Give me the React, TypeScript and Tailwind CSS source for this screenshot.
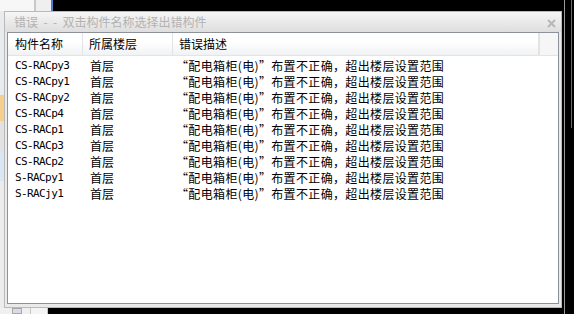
import React from "react";

const rows = [
  "CS-RACpy3",
  "CS-RACpy1",
  "CS-RACpy2",
  "CS-RACp4",
  "CS-RACp1",
  "CS-RACp3",
  "CS-RACp2",
  "S-RACpy1",
  "S-RACjy1",
];

const cjk = { fontFamily: '"Noto Sans CJK SC", "Noto Sans", sans-serif' };
const mono = { fontFamily: '"DejaVu Sans Mono", "Liberation Mono", monospace' };

export default function App() {
  return (
    <div className="relative w-[574px] h-[314px] bg-black overflow-hidden flex">
      {/* background app (behind the window) */}
      <div className="w-[54px] h-full flex flex-col">
        <div className="h-[11px] flex">
          <div className="w-[34px] bg-[#f7f7f7]" />
          <div className="w-[2px] bg-[#c8c8c8]" />
          <div className="w-[15px] bg-[#efefef]" />
          <div className="w-[2px] bg-[#4d7cc8]" />
          <div className="flex-1 bg-black" />
        </div>
        <div className="flex-1 flex">
          <div className="w-[4px] bg-[#e8e8e8] flex flex-col">
            <div className="h-[84px] bg-[#e9ecef]" />
            <div className="h-[26px] bg-[#f7cf8c]" />
            <div className="h-[30px] bg-[#e2e2e2]" />
            <div className="h-[30px] bg-[#d9e7f5]" />
            <div className="flex-1 bg-[#ececec]" />
          </div>
          <div className="flex-1 bg-[#f0f0f0]" />
        </div>
        <div className="h-[6px] flex bg-[#f0f0f0]">
          <div className="w-[12px]" />
          <div className="w-[10px] border border-[#a8a8a8] bg-[#d8dce4]" />
          <div className="w-[8px]" />
          <div className="w-[18px] border-l border-r border-[#c8c8c8] bg-[#f4f4f4]" />
          <div className="flex-1 bg-black" />
        </div>
      </div>
      <div className="flex-1" />
      <div className="w-[12px] h-full flex">
        <div className="w-[2px]" />
        <div className="w-[1px] bg-[#9a9a9a]" />
        <div className="w-[6px]" />
        <div className="w-[1px] h-[128px] bg-[#3d6fc0]" />
        <div className="flex-1" />
      </div>

      {/* dialog window */}
      <div className="absolute left-[4px] top-[11px] w-[558px] h-[297px] border border-[#b9b9b9] bg-[#eaeaea] flex flex-col">
        <div className="h-[20px] flex items-center justify-between bg-gradient-to-b from-[#f6f6f6] to-[#dedede] pl-[9px] pr-[5px]">
          <span className="text-[12px] leading-none text-[#b2b2b2] whitespace-pre" style={cjk}>
            {"错误  -  -  双击构件名称选择出错构件"}
          </span>
          <svg width="9" height="9" viewBox="0 0 9 9" className="mt-[2px]">
            <path d="M1 1 L8 8 M8 1 L1 8" stroke="#b8b8b8" strokeWidth="2" />
          </svg>
        </div>
        <div className="flex-1 mx-[2px] mb-[3px] border border-[#8d9199] bg-white flex flex-col">
          <div className="h-[23px] flex bg-gradient-to-b from-white from-40% to-[#f1f2f4] border-b border-[#e4e4e6] text-[12px] text-black" style={cjk}>
            <div className="w-[75px] flex items-center pl-[7px] border-r border-[#e3e3e5]">构件名称</div>
            <div className="w-[90px] flex items-center pl-[6px] border-r border-[#e3e3e5]">所属楼层</div>
            <div className="w-[367px] flex items-center pl-[6px] border-r-2 border-[#e3e3e5]">错误描述</div>
            <div className="flex-1 bg-[#f6f6f7]" />
          </div>
          <div className="pt-[2px] flex flex-col">
            {rows.map((r) => (
              <div key={r} className="h-[16px] flex items-center text-[12px] text-black">
                <div className="w-[75px] pl-[7px] text-[11px] tracking-[-0.6px]" style={mono}>{r}</div>
                <div className="w-[90px] pl-[7px]" style={cjk}>首层</div>
                <div className="pl-[3px] tracking-[0.35px]" style={cjk}>“配电箱柜(电)”布置不正确，超出楼层设置范围</div>
              </div>
            ))}
          </div>
        </div>
      </div>
    </div>
  );
}
